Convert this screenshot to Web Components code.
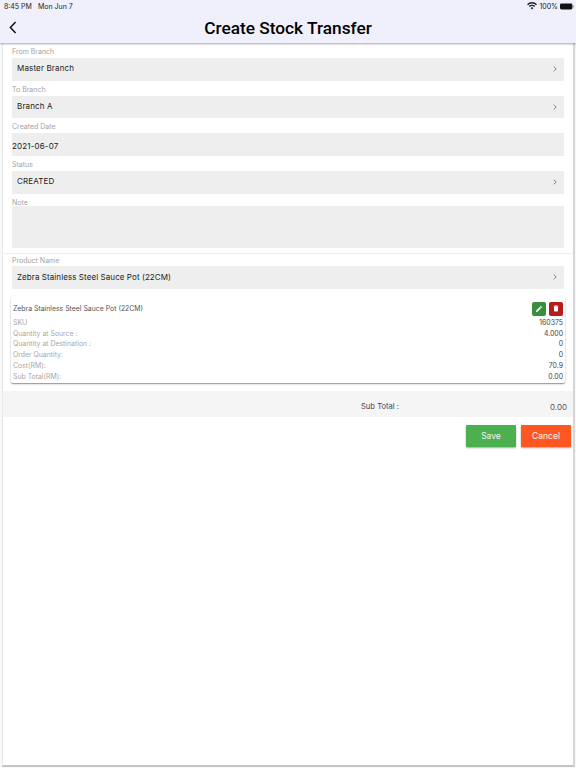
<!DOCTYPE html>
<html>
<head>
<meta charset="utf-8">
<style>
  html, body { margin: 0; padding: 0; background: #fff; }
  body { width: 576px; height: 768px; overflow: hidden; font-family: Inter, "Liberation Sans", sans-serif; }
  stock-transfer-page { height: 768px; }
</style>
</head>
<body>
<stock-transfer-page>
  <app-header slot="header" title="Create Stock Transfer"></app-header>
  <form-field label="From Branch" value="Master Branch" arrow></form-field>
  <form-field label="To Branch" value="Branch A" arrow></form-field>
  <form-field label="Created Date" value="2021-06-07" flush></form-field>
  <form-field label="Status" value="CREATED" arrow></form-field>
  <form-field label="Note" tall></form-field>
  <form-field label="Product Name" value="Zebra Stainless Steel Sauce Pot (22CM)" arrow divided></form-field>
  <product-card name="Zebra Stainless Steel Sauce Pot (22CM)">
    <detail-row label="SKU" value="160375"></detail-row>
    <detail-row label="Quantity at Source :" value="4.000"></detail-row>
    <detail-row label="Quantity at Destination :" value="0"></detail-row>
    <detail-row label="Order Quantity:" value="0"></detail-row>
    <detail-row label="Cost(RM):" value="70.9"></detail-row>
    <detail-row label="Sub Total(RM):" value="0.00"></detail-row>
  </product-card>
  <sub-total value="0.00"></sub-total>
  <form-actions></form-actions>
</stock-transfer-page>

<script>
class StockTransferPage extends HTMLElement {
  constructor() {
    super();
    this._shadowRoot = this.attachShadow({ mode: 'open' });
    this._shadowRoot.innerHTML = `
      <style>
        :host { display: flex; flex-direction: column; position: relative; box-sizing: border-box; background: #f8f8f8; }
        .sheet {
          flex: 1;
          margin: 0 1px 1px 2px;
          background: #fff;
          border-left: 1px solid #e8e8e8;
          border-right: 2px solid #d6d6d6;
          border-bottom: 2px solid #c4c4c4;
          display: flex;
          flex-direction: column;
        }
      </style>
      <slot name="header"></slot>
      <div class="sheet"><slot></slot></div>
    `;
  }
}

class AppHeader extends HTMLElement {
  constructor() {
    super();
    this._shadowRoot = this.attachShadow({ mode: 'open' });
    this._shadowRoot.innerHTML = `
      <style>
        :host {
          display: block;
          height: 43px;
          background: #eff0fb;
          box-shadow: 0 1px 2px rgba(0, 0, 0, 0.35);
          position: relative;
          z-index: 1;
          color: #000;
        }
        .status {
          height: 12px;
          display: flex;
          align-items: center;
          justify-content: space-between;
          padding: 0 2px 0 4px;
          font-size: 7px;
          color: #222;
        }
        .status span + span { margin-left: 6px; }
        .right { display: flex; align-items: center; gap: 2px; }
        .bar {
          height: 31px;
          display: grid;
          grid-template-columns: 40px 1fr 40px;
          align-items: center;
        }
        .back { padding-left: 9px; display: flex; }
        h1 {
          margin: 0;
          padding-top: 1px;
          font-family: Roboto, sans-serif;
          font-size: 17.3px;
          font-weight: 500;
          text-align: center;
          line-height: 30px;
        }
      </style>
      <div class="status">
        <div><span>8:45 PM</span><span>Mon Jun 7</span></div>
        <div class="right">
          <svg width="10" height="8" viewBox="0 0 10 8"><path d="M5 7.6 3.6 6a2 2 0 0 1 2.8 0zM2.7 5.1 1.8 4.1a4.6 4.6 0 0 1 6.4 0l-.9 1a3.3 3.3 0 0 0-4.6 0zM1 3.2 0 2.2a7 7 0 0 1 10 0l-1 1a5.7 5.7 0 0 0-8 0z" fill="#222"/></svg>
          <span>100%</span>
          <svg width="14" height="7" viewBox="0 0 14 7"><rect x="0" y="0.5" width="12.4" height="6" rx="1.4" fill="#111"/><rect x="12.8" y="2.4" width="1" height="2.2" rx="0.5" fill="#888"/></svg>
        </div>
      </div>
      <div class="bar">
        <div class="back">
          <svg width="8" height="13" viewBox="0 0 8 13"><path d="M6.6 1 1.4 6.5l5.2 5.5" fill="none" stroke="#111" stroke-width="1.5"/></svg>
        </div>
        <h1>${this.getAttribute('title')}</h1>
        <div></div>
      </div>
    `;
  }
}

class FormField extends HTMLElement {
  constructor() {
    super();
    this._shadowRoot = this.attachShadow({ mode: 'open' });
  }

  connectedCallback() {
    const value = this.getAttribute('value') || '';
    const arrow = this.hasAttribute('arrow')
      ? `<svg width="4" height="6" viewBox="0 0 4 6"><path d="M0.8 0.7 3.2 3 0.8 5.3" fill="none" stroke="#666" stroke-width="0.8"/></svg>`
      : '';
    this._shadowRoot.innerHTML = `
      <style>
        :host { display: block; padding: 3.17px 9px 0 9px; }
        :host([divided]) { margin-top: 5px; border-top: 1px solid #eeeeee; padding-top: 1px; }
        label {
          display: block;
          font-size: 7px;
          line-height: 11px;
          height: 11px;
          color: #a3a3a3;
          margin-bottom: 1px;
        }
        .box {
          box-sizing: border-box;
          height: 22.5px;
          background: #eeeeee;
          display: flex;
          align-items: center;
          justify-content: space-between;
          padding: 0 7px 2.5px 5px;
          font-size: 8px;
          letter-spacing: 0.15px;
          color: #222;
        }
        .box svg { margin-top: 2.5px; }
        :host([divided]) label { margin-bottom: 0; }
        :host([divided]) .box { height: 23px; padding-bottom: 0; letter-spacing: 0.08px; }
        :host([divided]) .box svg { margin-top: 0; }
        :host([flush]) .box { padding: 2.5px 0 0 0; }
        :host([tall]) label { margin-bottom: -2px; }
        :host([tall]) .box { height: 42px; }
      </style>
      <label>${this.getAttribute('label')}</label>
      <div class="box"><span>${value}</span>${arrow}</div>
    `;
  }
}

class ProductCard extends HTMLElement {
  constructor() {
    super();
    this._shadowRoot = this.attachShadow({ mode: 'open' });
    this._shadowRoot.innerHTML = `
      <style>
        :host {
          display: block;
          margin: 7px 8px 0 8px;
          padding: 6px 2px 0 2px;
          background: #fff;
          border-radius: 2px;
          box-shadow: 0 1px 1.5px rgba(0, 0, 0, 0.45);
        }
        .top { display: flex; align-items: flex-start; justify-content: space-between; height: 16px; }
        .name { font-size: 6.9px; line-height: 14px; color: #555; }
        .tools { display: flex; gap: 3px; }
        .tool {
          width: 14px;
          height: 14px;
          border-radius: 2px;
          display: flex;
          align-items: center;
          justify-content: center;
        }
        .edit { background: #388e3c; }
        .delete { background: #b71c1c; }
      </style>
      <div class="top">
        <span class="name">${this.getAttribute('name')}</span>
        <div class="tools">
          <div class="tool edit"><svg width="8" height="8" viewBox="0 0 24 24"><path fill="#fff" d="M3 17.25V21h3.75L17.81 9.94l-3.75-3.75L3 17.25zM20.71 7.04a1 1 0 0 0 0-1.41l-2.34-2.34a1 1 0 0 0-1.41 0l-1.83 1.83 3.75 3.75 1.83-1.83z"/></svg></div>
          <div class="tool delete"><svg width="8" height="9" viewBox="0 0 24 24"><path fill="#fff" d="M6 19c0 1.1.9 2 2 2h8c1.1 0 2-.9 2-2V7H6v12zM19 4h-3.5l-1-1h-5l-1 1H5v2h14V4z"/></svg></div>
        </div>
      </div>
      <slot></slot>
    `;
  }
}

class DetailRow extends HTMLElement {
  constructor() {
    super();
    this._shadowRoot = this.attachShadow({ mode: 'open' });
    this._shadowRoot.innerHTML = `
      <style>
        :host {
          display: flex;
          justify-content: space-between;
          height: 10.8px;
          line-height: 10.8px;
          font-size: 6.9px;
          color: #a8a8a8;
        }
        .value { color: #444; }
      </style>
      <span>${this.getAttribute('label')}</span>
      <span class="value">${this.getAttribute('value')}</span>
    `;
  }
}

class SubTotal extends HTMLElement {
  constructor() {
    super();
    this._shadowRoot = this.attachShadow({ mode: 'open' });
    this._shadowRoot.innerHTML = `
      <style>
        :host {
          display: block;
          margin-top: 8px;
          height: 26px;
          background: #f5f5f5;
          position: relative;
          font-size: 8px;
          color: #555;
        }
        .row { display: flex; justify-content: flex-end; align-items: center; height: 100%; padding-right: 6px; padding-top: 6px; box-sizing: border-box; }
        .caption { margin-right: 151px; font-size: 7.6px; color: #44445a; }
      </style>
      <div class="row">
        <span class="caption">Sub Total :</span>
        <span>${this.getAttribute('value')}</span>
      </div>
    `;
  }
}

class FormActions extends HTMLElement {
  constructor() {
    super();
    this._shadowRoot = this.attachShadow({ mode: 'open' });
    this._shadowRoot.innerHTML = `
      <style>
        :host { display: flex; justify-content: flex-end; gap: 5px; margin-top: 8px; padding-right: 2px; }
        button {
          width: 50px;
          height: 22px;
          border: 0;
          border-radius: 1px;
          padding: 0;
          color: #f4f4f4;
          font-family: inherit;
          font-size: 8.5px;
          box-shadow: 0 1px 2px rgba(0, 0, 0, 0.35);
        }
        .save { background: #4caf50; }
        .cancel { background: #ff5722; }
      </style>
      <button class="save">Save</button>
      <button class="cancel">Cancel</button>
    `;
  }
}

customElements.define('stock-transfer-page', StockTransferPage);
customElements.define('app-header', AppHeader);
customElements.define('form-field', FormField);
customElements.define('product-card', ProductCard);
customElements.define('detail-row', DetailRow);
customElements.define('sub-total', SubTotal);
customElements.define('form-actions', FormActions);
</script>
</body>
</html>
